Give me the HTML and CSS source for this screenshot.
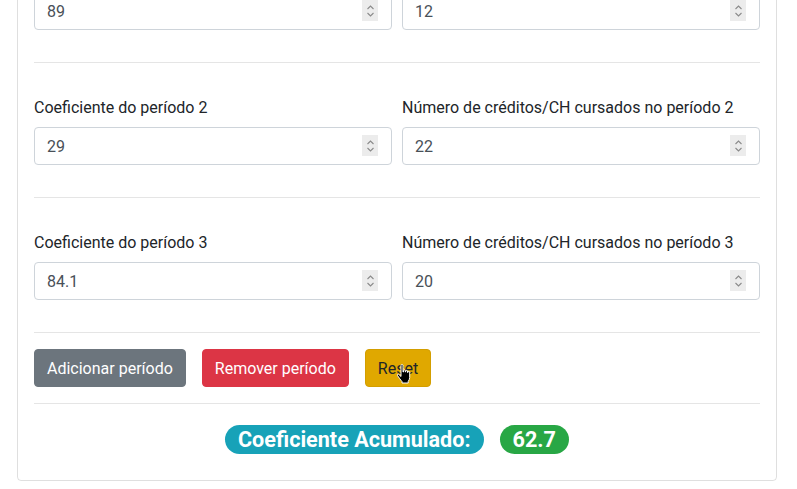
FILE: index.html
```html
<!DOCTYPE html>
<html lang="pt-BR">
<head>
<meta charset="utf-8">
<title>Coeficiente Acumulado</title>
<link rel="stylesheet" href="styles.css">
</head>
<body>
<div class="page">
  <div class="card">
    <div class="period">
      <div class="row">
        <div class="form-group">
          <label>Coeficiente do período 1</label>
          <div class="field"><input class="form-control" type="number" value="89"><span class="spin"><svg width="9" height="14" viewBox="0 0 9 14"><path d="M1.5 5 4.5 2 7.5 5M1.5 9l3 3 3-3" fill="none" stroke="#8a8a8a" stroke-width="1.1"/></svg></span></div>
        </div>
        <div class="form-group">
          <label>Número de créditos/CH cursados no período 1</label>
          <div class="field"><input class="form-control" type="number" value="12"><span class="spin"><svg width="9" height="14" viewBox="0 0 9 14"><path d="M1.5 5 4.5 2 7.5 5M1.5 9l3 3 3-3" fill="none" stroke="#8a8a8a" stroke-width="1.1"/></svg></span></div>
        </div>
      </div>
    </div>
    <hr>
    <div class="period">
      <div class="row">
        <div class="form-group">
          <label>Coeficiente do período 2</label>
          <div class="field"><input class="form-control" type="number" value="29"><span class="spin"><svg width="9" height="14" viewBox="0 0 9 14"><path d="M1.5 5 4.5 2 7.5 5M1.5 9l3 3 3-3" fill="none" stroke="#8a8a8a" stroke-width="1.1"/></svg></span></div>
        </div>
        <div class="form-group">
          <label>Número de créditos/CH cursados no período 2</label>
          <div class="field"><input class="form-control" type="number" value="22"><span class="spin"><svg width="9" height="14" viewBox="0 0 9 14"><path d="M1.5 5 4.5 2 7.5 5M1.5 9l3 3 3-3" fill="none" stroke="#8a8a8a" stroke-width="1.1"/></svg></span></div>
        </div>
      </div>
    </div>
    <hr>
    <div class="period">
      <div class="row">
        <div class="form-group">
          <label>Coeficiente do período 3</label>
          <div class="field"><input class="form-control" type="number" value="84.1"><span class="spin"><svg width="9" height="14" viewBox="0 0 9 14"><path d="M1.5 5 4.5 2 7.5 5M1.5 9l3 3 3-3" fill="none" stroke="#8a8a8a" stroke-width="1.1"/></svg></span></div>
        </div>
        <div class="form-group">
          <label>Número de créditos/CH cursados no período 3</label>
          <div class="field"><input class="form-control" type="number" value="20"><span class="spin"><svg width="9" height="14" viewBox="0 0 9 14"><path d="M1.5 5 4.5 2 7.5 5M1.5 9l3 3 3-3" fill="none" stroke="#8a8a8a" stroke-width="1.1"/></svg></span></div>
        </div>
      </div>
    </div>
    <hr>
    <div class="actions">
      <button class="btn btn-secondary">Adicionar período</button>
      <button class="btn btn-danger">Remover período</button>
      <button class="btn btn-warning">Reset<svg class="cursor" width="17" height="20" viewBox="0 0 17 20"><path d="M5 1.5c0-.8.6-1 1-1s1 .2 1 1V8h.5V6.5c0-.8 1.8-.8 1.8 0V8h.4V7c0-.8 1.8-.8 1.8 0V8.5h.4V8c0-.8 1.8-.8 1.8 0v5.5c0 1.5-.8 3-1.5 4v1.5H6v-1.5C5 16.5 2.5 13 1.5 11.5c-.6-.9.5-1.8 1.3-1.1L5 12.5z" fill="#000" stroke="#fff" stroke-width="1"/></svg></button>
    </div>
    <hr>
    <div class="result">
      <span class="badge badge-info">Coeficiente Acumulado:</span>
      <span class="badge badge-success">62.7</span>
    </div>
  </div>
</div>
</body>
</html>
```

FILE: styles.css
```css
* { box-sizing: border-box; }
html, body { margin: 0; padding: 0; background: #fff; }
body {
  font-family: Roboto, "Liberation Sans", sans-serif;
  font-size: 16px;
  line-height: 24px;
  color: #212529;
}
.page {
  padding: 0 20px 0 17px;
  margin-top: -73px;
}
.card {
  width: 760px;
  border: 1px solid rgba(0,0,0,.125);
  border-radius: 4px;
  padding: 16px;
}
.period { padding-top: 16px; }
.row {
  display: grid;
  grid-template-columns: 1fr 1fr;
  column-gap: 10px;
}
.form-group { margin-bottom: 16px; }
label {
  display: block;
  margin-bottom: 8px;
  padding-top: 1px;
  line-height: 23px;
}
.field { position: relative; }
.form-control {
  display: block;
  width: 100%;
  height: 38px;
  padding: 6px 12px;
  font-family: inherit;
  font-size: 16px;
  line-height: 24px;
  color: #495057;
  background: #fff;
  border: 1px solid #ced4da;
  border-radius: 4px;
  -moz-appearance: textfield;
  appearance: textfield;
}
.form-control::-webkit-inner-spin-button,
.form-control::-webkit-outer-spin-button {
  -webkit-appearance: none;
  margin: 0;
}
.spin {
  position: absolute;
  right: 14px;
  top: 8px;
  width: 16px;
  height: 21px;
  background: #ececec;
  display: flex;
  align-items: center;
  justify-content: center;
}
hr {
  margin: 16px 0;
  border: 0;
  border-top: 1px solid rgba(0,0,0,.1);
  height: 0;
}
.actions {
  display: flex;
  gap: 16px;
}
.btn {
  font-family: inherit;
  font-size: 16px;
  line-height: 24px;
  padding: 7px 12px 5px;
  border: 1px solid transparent;
  border-radius: 4px;
  color: #fff;
  cursor: pointer;
}
.btn-secondary { background: #6c757d; border-color: #6c757d; }
.btn-danger { background: #dc3545; border-color: #dc3545; }
.btn-warning {
  background: #e0a800;
  border-color: #d39e00;
  color: #212529;
  position: relative;
}
.cursor {
  position: absolute;
  left: 30px;
  top: 14px;
}
.result {
  display: flex;
  justify-content: center;
  gap: 16px;
  padding-top: 5px;
  margin-bottom: 10px;
}
.badge {
  display: inline-block;
  font-size: 21.6px;
  font-weight: 700;
  line-height: 21px;
  padding: 4px 13px;
  border-radius: 160px;
  color: #fff;
}
.badge-info { background: #17a2b8; }
.badge-success { background: #28a745; }
```
